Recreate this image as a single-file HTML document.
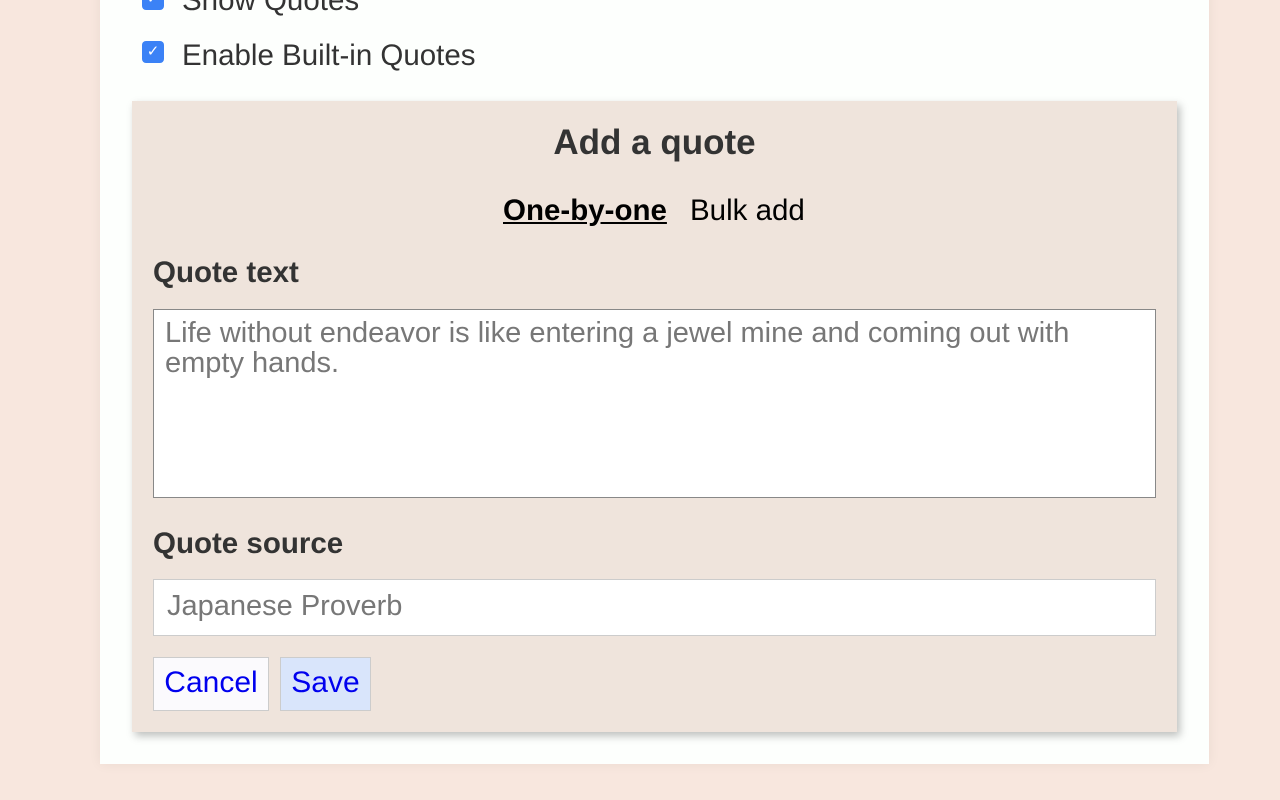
<!DOCTYPE html>
<html><head><style>
html,body{margin:0;width:1280px;height:800px;overflow:hidden;background:#f8e7de;font-family:"Liberation Sans",sans-serif}
.card{position:absolute;left:100px;top:-20px;width:1109px;height:784px;background:#fdfffd;box-shadow:0 0 12px rgba(0,0,0,0.06)}
.cb{position:absolute;left:142px;width:22px;height:22px;border-radius:4px;background:#3b82f6;color:#fff;font-size:15px;line-height:22px;text-align:center}
.lbl{position:absolute;left:182px;font-size:29.5px;color:#333;line-height:30px}
.panel{position:absolute;left:132px;top:101px;width:1045px;height:631px;background:#efe4dc;box-shadow:3px 4px 8px rgba(0,0,0,0.25)}
h2{position:absolute;top:123px;left:132px;width:1045px;text-align:center;margin:0;font-size:35px;color:#333;line-height:40px}
.tab{position:absolute;top:195px;font-size:29.5px;line-height:32px;color:#000}
.fl{position:absolute;left:153px;font-size:29.5px;font-weight:bold;color:#333;line-height:32px}
.ta{position:absolute;left:153px;top:309px;width:1001px;height:187px;background:#fff;border:1px solid #888;color:#777;font-size:29px;line-height:30px;box-sizing:content-box}
.in{position:absolute;left:153px;top:579px;width:1001px;height:55px;background:#fff;border:1px solid #ccc;color:#777;font-size:29px;line-height:52px}
.btn{position:absolute;top:657px;height:52px;border:1px solid #ccc;color:#00e;font-size:30px;line-height:50px;text-align:center}
</style></head><body>
<div class="card"></div>
<div class="cb" style="top:-12px">✓</div><div class="lbl" style="top:-14px">Show Quotes</div>
<div class="cb" style="top:41px">✓</div><div class="lbl" style="top:41px">Enable Built-in Quotes</div>
<div class="panel"></div>
<h2>Add a quote</h2>
<div class="tab" style="left:503px;font-weight:bold;text-decoration:underline">One-by-one</div>
<div class="tab" style="left:690px">Bulk add</div>
<div class="fl" style="top:257px">Quote text</div>
<div class="ta"><div style="padding:8px 11px;width:950px">Life without endeavor is like entering a jewel mine and coming out with empty hands.</div></div>
<div class="fl" style="top:528px">Quote source</div>
<div class="in"><span style="padding-left:13px">Japanese Proverb</span></div>
<div class="btn" style="left:153px;width:114px;background:#fbfafd">Cancel</div>
<div class="btn" style="left:280px;width:89px;background:#d9e5fb">Save</div>
</body></html>
